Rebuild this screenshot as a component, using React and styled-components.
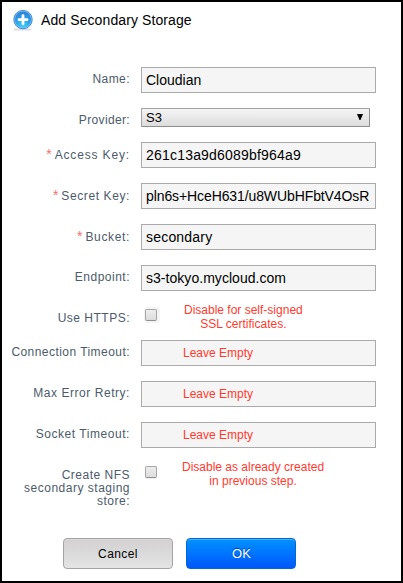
import React from "react";
import styled, { createGlobalStyle } from "styled-components";

const GlobalStyle = createGlobalStyle`
  * { box-sizing: border-box; }
  body { margin: 0; background: #fff; }
  button, input { font-family: "Liberation Sans", Arial, sans-serif; }
`;

const Dialog = styled.form`
  width: 403px;
  height: 583px;
  border: 2px solid #000;
  background: #fff;
  font-family: "Liberation Sans", Arial, sans-serif;
  overflow: hidden;
`;

const Header = styled.header`
  display: flex;
  height: 65px;
  padding: 6px 0 0 9px;
`;

const Title = styled.h1`
  margin: 4px 0 0 8px;
  font-size: 14px;
  font-weight: 400;
  line-height: 16px;
  letter-spacing: 0.1px;
  color: #000;
`;

const Row = styled.div`
  display: grid;
  grid-template-columns: 128px 235px;
  column-gap: 11px;
  align-items: start;
  height: ${(p) => p.$height || 41}px;
`;

const Label = styled.label`
  padding-top: ${(p) => p.$top || 6}px;
  text-align: right;
  white-space: pre-line;
  font-size: 12px;
  line-height: 13px;
  letter-spacing: ${(p) => p.$spacing ?? 0.45}px;
  color: #4b5b6b;
`;

const Required = styled.span`
  margin-right: 3px;
  font-size: 14px;
  line-height: 1px;
  letter-spacing: 0;
  color: #f0706a;
`;

const Field = styled.div`
  display: flex;
  align-items: center;
  width: 235px;
  height: 26px;
  padding: 0 0 0 4px;
  border: 1px solid #aaa;
  background: #f5f5f5;
  font-size: 14px;
  line-height: 16px;
  letter-spacing: ${(p) => p.$spacing || 0}px;
  color: #000;
  white-space: nowrap;
`;

const Select = styled.div`
  display: flex;
  justify-content: space-between;
  width: 229px;
  height: 19px;
  padding: 1px 6px 0 4px;
  border: 1px solid #999;
  border-color: #a3a3a3 #8e8e8e #8e8e8e #a3a3a3;
  border-radius: 1px;
  background: linear-gradient(#f5f5f5, #dcdcdc);
  font-size: 13px;
  line-height: 15px;
  color: #000;
`;

const Arrow = styled.svg`
  width: 6px;
  height: 6px;
  margin-top: 4px;
`;

const CheckLine = styled.div`
  display: flex;
  align-items: flex-start;
  padding-left: 4px;
`;

const Checkbox = styled.input`
  appearance: none;
  flex: none;
  width: 12px;
  height: 12px;
  margin: 0;
  border: 1px solid #a6a6a6;
  border-bottom-color: #8f8f8f;
  border-radius: 2px;
  background: linear-gradient(#ededed, #dcdcdc);
  box-shadow: ${(p) => (p.$halo ? "1px 0 0 2px #f4f4f4" : "0 1px 1px #eee")};
`;

const Note = styled.span`
  margin: -6px 0 0 ${(p) => p.$left}px;
  text-align: center;
  white-space: pre;
  font-size: 12px;
  line-height: 14px;
  color: #ff3b30;
`;

const Hint = styled.span`
  padding-left: 37px;
  font-size: 12px;
  line-height: 14px;
  color: #ff3b30;
`;

const Actions = styled.footer`
  display: flex;
  gap: 13px;
  padding-left: 61px;
`;

const Button = styled.button`
  width: 110px;
  height: 31px;
  padding: 0 0 0 ${(p) => (p.$primary ? 1 : 0)}px;
  border: 1px solid ${(p) => (p.$primary ? "#0069cf" : "#a4a4a4")};
  border-radius: 4px;
  background: ${(p) =>
    p.$primary ? "linear-gradient(#0092ff, #0057ff)" : "linear-gradient(#d2d0d1, #e4e4e4)"};
  box-shadow: ${(p) => (p.$primary ? "inset 0 1px 0 #45b1ff" : "inset 0 1px 0 #dbd9da")};
  color: ${(p) => (p.$primary ? "#fff" : "#000")};
  text-shadow: ${(p) => (p.$primary ? "0 -1px 1px #00428f" : "none")};
  font-size: ${(p) => (p.$primary ? 13 : 12)}px;
  letter-spacing: ${(p) => (p.$primary ? 0 : 0.4)}px;
`;

const PlusIcon = () => (
  <svg width="22" height="23" viewBox="0 0 22 23">
    <defs>
      <radialGradient id="plus-fill" cx="50%" cy="90%" r="85%">
        <stop offset="0" stopColor="#3fd2f8" />
        <stop offset="0.5" stopColor="#2ba6e6" />
        <stop offset="1" stopColor="#2f83d8" />
      </radialGradient>
    </defs>
    <rect x="2.5" y="20.5" width="18" height="2" rx="1" fill="#dedede" />
    <circle cx="12" cy="11.6" r="9.2" fill="#8fc4f5" stroke="#2f80dc" strokeWidth="0.9" />
    <circle cx="12" cy="11.6" r="8.1" fill="url(#plus-fill)" />
    <path d="M12 7.7v8M8 11.7h8" stroke="#fff" strokeWidth="2.8" strokeLinecap="round" />
  </svg>
);

const credentials = [
  { label: "Access Key:", value: "261c13a9d6089bf964a9", labelSpacing: 0.85, spacing: 0.2 },
  { label: "Secret Key:", value: "pln6s+HceH631/u8WUbHFbtV4OsR", labelSpacing: 0.6, spacing: -0.1 },
  { label: "Bucket:", value: "secondary", labelSpacing: 0.65, spacing: 0.2 },
];

const emptyFields = [
  { label: "Connection Timeout:", height: 41 },
  { label: "Max Error Retry:", height: 41, labelSpacing: 0.55 },
  { label: "Socket Timeout:", height: 44, labelSpacing: 0.55 },
];

export default function App() {
  return (
    <>
      <GlobalStyle />
      <Dialog>
        <Header>
          <PlusIcon />
          <Title>Add Secondary Storage</Title>
        </Header>
        <Row>
          <Label>Name:</Label>
          <Field>Cloudian</Field>
        </Row>
        <Row $height={34}>
          <Label $spacing={0.35}>Provider:</Label>
          <Select>
            S3
            <Arrow viewBox="0 0 6 6"><path d="M0 0h6L3.5 6h-1z" /></Arrow>
          </Select>
        </Row>
        {credentials.map((c) => (
          <Row key={c.label}>
            <Label $top={7} $spacing={c.labelSpacing}><Required>*</Required>{c.label}</Label>
            <Field $spacing={c.spacing}>{c.value}</Field>
          </Row>
        ))}
        <Row $height={44}>
          <Label $spacing={0.5}>Endpoint:</Label>
          <Field $spacing={0.04}>s3-tokyo.mycloud.com</Field>
        </Row>
        <Row $height={31}>
          <Label $top={3} $spacing={0.5}>Use HTTPS:</Label>
          <CheckLine>
            <Checkbox type="checkbox" $halo />
            <Note $left={27}>{"Disable for self-signed\nSSL certificates."}</Note>
          </CheckLine>
        </Row>
        {emptyFields.map((f) => (
          <Row key={f.label} $height={f.height}>
            <Label $spacing={f.labelSpacing}>{f.label}</Label>
            <Field><Hint>Leave Empty</Hint></Field>
          </Row>
        ))}
        <Row $height={72}>
          <Label $top={3} $spacing={0.5}>{"Create NFS\nsecondary staging\nstore:"}</Label>
          <CheckLine>
            <Checkbox type="checkbox" />
            <Note $left={25}>{"Disable as already created\nin previous step."}</Note>
          </CheckLine>
        </Row>
        <Actions>
          <Button type="button">Cancel</Button>
          <Button type="button" $primary>OK</Button>
        </Actions>
      </Dialog>
    </>
  );
}
